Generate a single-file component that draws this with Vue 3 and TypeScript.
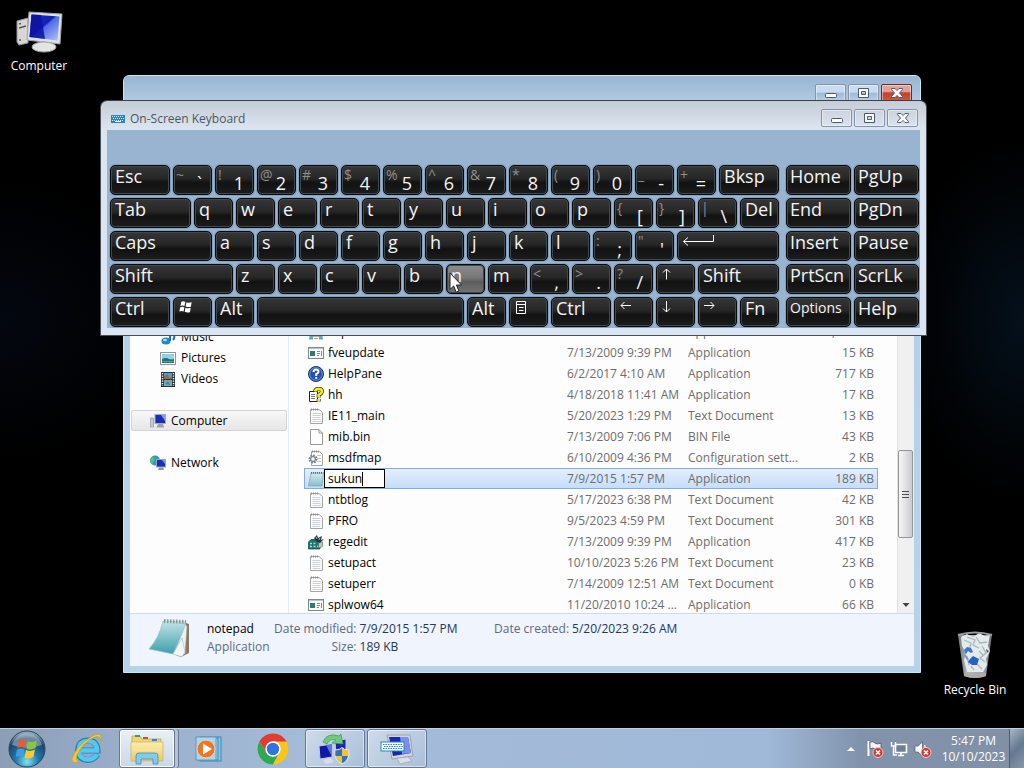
<script setup lang="ts">
interface Key {
  span: number
  label?: string
  upper?: string
  lower?: string
  icon?: string
  name?: string
  hover?: boolean
}

interface FileRow {
  icon: string
  name: string
  date: string
  type: string
  size: string
  selected?: boolean
}

const letters = (text: string): Key[] => text.split('').map((c) => ({ span: 2, label: c, hover: c === 'n' }))
const pair = (upper: string, lower: string): Key => ({ span: 2, upper, lower })

const rows: Key[][] = [
  [
    { span: 3, label: 'Esc' },
    pair('~', '`'), pair('!', '1'), pair('@', '2'), pair('#', '3'), pair('$', '4'), pair('%', '5'),
    pair('^', '6'), pair('&', '7'), pair('*', '8'), pair('(', '9'), pair(')', '0'), pair('_', '-'), pair('+', '='),
    { span: 3, label: 'Bksp' },
  ],
  [
    { span: 4, label: 'Tab' },
    ...letters('qwertyuiop'),
    pair('{', '['), pair('}', ']'), pair('|', '\\'),
    { span: 2, label: 'Del' },
  ],
  [
    { span: 5, label: 'Caps' },
    ...letters('asdfghjkl'),
    pair(':', ';'), pair('"', "'"),
    { span: 5, icon: 'k-enter', name: 'Enter' },
  ],
  [
    { span: 6, label: 'Shift' },
    ...letters('zxcvbnm'),
    pair('<', ','), pair('>', '.'), pair('?', '/'),
    { span: 2, icon: 'k-up', name: 'Up' },
    { span: 4, label: 'Shift' },
  ],
  [
    { span: 3, label: 'Ctrl' },
    { span: 2, icon: 'k-win', name: 'Windows' },
    { span: 2, label: 'Alt' },
    { span: 10, name: 'Space' },
    { span: 2, label: 'Alt' },
    { span: 2, icon: 'k-menu', name: 'Menu' },
    { span: 3, label: 'Ctrl' },
    { span: 2, icon: 'k-left', name: 'Left' },
    { span: 2, icon: 'k-down', name: 'Down' },
    { span: 2, icon: 'k-right', name: 'Right' },
    { span: 2, label: 'Fn' },
  ],
]
const keys: Key[] = rows.flat()
const sideKeys = ['Home', 'PgUp', 'End', 'PgDn', 'Insert', 'Pause', 'PrtScn', 'ScrLk', 'Options', 'Help']

const files: FileRow[] = [
  { icon: 'f-explorer', name: 'explorer', date: '2/25/2011 11:19 PM', type: 'Application', size: '2,804 KB' },
  { icon: 'f-exe', name: 'fveupdate', date: '7/13/2009 9:39 PM', type: 'Application', size: '15 KB' },
  { icon: 'f-help', name: 'HelpPane', date: '6/2/2017 4:10 AM', type: 'Application', size: '717 KB' },
  { icon: 'f-hh', name: 'hh', date: '4/18/2018 11:41 AM', type: 'Application', size: '17 KB' },
  { icon: 'f-text', name: 'IE11_main', date: '5/20/2023 1:29 PM', type: 'Text Document', size: '13 KB' },
  { icon: 'f-blank', name: 'mib.bin', date: '7/13/2009 7:06 PM', type: 'BIN File', size: '43 KB' },
  { icon: 'f-config', name: 'msdfmap', date: '6/10/2009 4:36 PM', type: 'Configuration sett...', size: '2 KB' },
  { icon: 'f-notepad', name: 'sukun', date: '7/9/2015 1:57 PM', type: 'Application', size: '189 KB', selected: true },
  { icon: 'f-text', name: 'ntbtlog', date: '5/17/2023 6:38 PM', type: 'Text Document', size: '42 KB' },
  { icon: 'f-text', name: 'PFRO', date: '9/5/2023 4:59 PM', type: 'Text Document', size: '301 KB' },
  { icon: 'f-regedit', name: 'regedit', date: '7/13/2009 9:39 PM', type: 'Application', size: '417 KB' },
  { icon: 'f-text', name: 'setupact', date: '10/10/2023 5:26 PM', type: 'Text Document', size: '23 KB' },
  { icon: 'f-text', name: 'setuperr', date: '7/14/2009 12:51 AM', type: 'Text Document', size: '0 KB' },
  { icon: 'f-exe', name: 'splwow64', date: '11/20/2010 10:24 ...', type: 'Application', size: '66 KB' },
]

const windowButtons = ['minimize', 'maximize', 'close']
</script>

<template>
  <div class="desktop">
    <svg class="defs" aria-hidden="true">
      <defs>
        <linearGradient id="gScreen" x1="0" y1="0" x2="1" y2="1">
          <stop offset="0" stop-color="#1a2fd0" />
          <stop offset=".45" stop-color="#1420b4" />
          <stop offset=".5" stop-color="#4d6be6" />
          <stop offset="1" stop-color="#b8c6f8" />
        </linearGradient>
        <linearGradient id="gTeal" x1="0" y1="0" x2="0" y2="1">
          <stop offset="0" stop-color="#c2e4e8" />
          <stop offset="1" stop-color="#3d9fab" />
        </linearGradient>
        <linearGradient id="gPad" x1="0" y1="0" x2="0" y2="1">
          <stop offset="0" stop-color="#d3e9ee" />
          <stop offset="1" stop-color="#86c0cc" />
        </linearGradient>
        <linearGradient id="gFolder" x1="0" y1="0" x2="0" y2="1">
          <stop offset="0" stop-color="#fbeeb0" />
          <stop offset="1" stop-color="#ecca62" />
        </linearGradient>
        <radialGradient id="gOrb" cx=".5" cy=".85" r=".8">
          <stop offset="0" stop-color="#7fe4f5" />
          <stop offset=".4" stop-color="#2079a8" />
          <stop offset=".8" stop-color="#1c4468" />
          <stop offset="1" stop-color="#8da6bb" />
        </radialGradient>
        <linearGradient id="gBin" x1="0" y1="0" x2="1" y2="0">
          <stop offset="0" stop-color="#8f979c" />
          <stop offset=".3" stop-color="#dfe6ea" />
          <stop offset=".75" stop-color="#c7d0d6" />
          <stop offset="1" stop-color="#7c868c" />
        </linearGradient>
      </defs>

      <symbol id="k-enter" viewBox="0 0 34 14"><path d="M1.500 7.500H31.500V1M6 3.500L1.500 7.500L6 11.500" /></symbol>
      <symbol id="k-up" viewBox="0 0 14 14"><path d="M5.500 12.500V2M2 5.500L5.500 2L9 5.500" /></symbol>
      <symbol id="k-down" viewBox="0 0 14 14"><path d="M5.500 1V12M2 8.500L5.500 12L9 8.500" /></symbol>
      <symbol id="k-left" viewBox="0 0 14 14"><path d="M12 5.500H2M5.500 2L2 5.500L5.500 9" /></symbol>
      <symbol id="k-right" viewBox="0 0 14 14"><path d="M1 5.500H11M7.500 2L11 5.500L7.500 9" /></symbol>
      <symbol id="k-win" viewBox="0 0 15 14">
        <g fill="#fff" stroke="none">
          <path d="M3.500 1.500Q5.500 .3 7.800 1.400L7 6Q5 5 2.600 6Z" /><path d="M9 1.900Q11.500 3 14.600 2L13.800 6.600Q11 7.500 8.200 6.400Z" />
          <path d="M2.300 7.300Q4.600 6.200 6.800 7.300L6 11.800Q4 10.800 1.500 11.800Z" /><path d="M8 7.700Q10.500 8.800 13.600 7.900L12.800 12.500Q10 13.400 7.200 12.200Z" />
        </g>
      </symbol>
      <symbol id="k-menu" viewBox="0 0 14 14"><path d="M2.500 1.500H11.500V13.500H2.500ZM2 4.500H12M5 7.500H9.500M5 10.500H9.500" /></symbol>

      <symbol id="w-minimize" viewBox="0 0 14 12"><rect x="1.500" y="6.500" width="11" height="4" rx="1" fill="#fdfdfe" stroke="#4d5a75" /></symbol>
      <symbol id="w-maximize" viewBox="0 0 14 12"><path fill="#fdfdfe" fill-rule="evenodd" stroke="#4d5a75" d="M1.500 1.500H11.500V10.500H1.500ZM4.500 4.500V7.500H8.500V4.500Z" /></symbol>
      <symbol id="w-close" viewBox="0 0 14 12"><path fill="#fdfdfe" stroke="#4d5a75" stroke-linejoin="round" d="M1.500 1.500H5L7 3.500L9 1.500H12.500V2.500L9.500 6L12.500 9.500V10.500H9L7 8.500L5 10.500H1.500V9.500L4.500 6L1.500 2.500Z" /></symbol>

      <symbol id="f-exe" viewBox="0 0 16 16">
        <rect x=".5" y="2.500" width="15" height="11" fill="#f8f9f9" stroke="#7d8a92" /><path d="M1 3.500H15" stroke="#b9c3ca" />
        <rect x="2" y="6" width="5" height="5" fill="#35776a" /><path d="M9 6.500H12M9 8.500H12M9 10.500H11M13.500 6V11" stroke="#7f8c92" />
      </symbol>
      <symbol id="f-help" viewBox="0 0 16 16">
        <circle cx="8" cy="8" r="7.500" fill="#2350b5" stroke="#1a3677" /><circle cx="8" cy="8" r="6.300" fill="none" stroke="#7ea5e8" stroke-width=".8" />
        <path d="M5.400 6Q6 3.400 8.200 3.500Q10.700 3.800 10.400 6Q10.200 7.200 8.200 8.200V9.900M8.200 11V12.700" fill="none" stroke="#fff" stroke-width="2" />
      </symbol>
      <symbol id="f-hh" viewBox="0 0 16 16">
        <path d="M1.500 4.500H9.500V14.500H1.500Z" fill="#fff" stroke="#222" /><path d="M3 7.500H7M3 9.500H7M3 11.500H7" stroke="#777" />
        <path d="M7 4.500Q7.500 1.800 11 1.800Q14.500 2.200 13.800 5Q13.400 6.800 10.700 8V10.500M10.700 12V14.500" fill="none" stroke="#222" stroke-width="4" />
        <path d="M7 4.500Q7.500 1.800 11 1.800Q14.500 2.200 13.800 5Q13.400 6.800 10.700 8V10.500M10.700 12V14.500" fill="none" stroke="#f5ee1e" stroke-width="2.800" />
      </symbol>
      <symbol id="f-text" viewBox="0 0 16 16">
        <path d="M2.500 1.500H11L14.500 4.500V15.500H2.500Z" fill="#fcfcfc" stroke="#a4a4a4" /><path d="M3 1.500H11" stroke="#8a8a8a" stroke-dasharray="1 1" stroke-width="2" />
        <path d="M4.500 5.500H12.500M4.500 7.500H12.500M4.500 9.500H12.500M4.500 11.500H12.500M4.500 13.500H12.500" stroke="#cfd2d5" />
      </symbol>
      <symbol id="f-blank" viewBox="0 0 16 16"><path d="M2.500 .5H11L14.500 4V15.500H2.500ZM11 .5V4H14.500" fill="#fefefe" stroke="#9a9a9a" /></symbol>
      <symbol id="f-config" viewBox="0 0 16 16">
        <path d="M3.500 1.500H11.500L14.500 4.500V15.500H3.500Z" fill="#fcfcfc" stroke="#a4a4a4" /><path d="M4 1.500H11" stroke="#8a8a8a" stroke-dasharray="1 1" stroke-width="2" />
        <path d="M9 5.500H13M9 8.500H13M9 11.500H13" stroke="#c3c6ca" />
        <circle cx="5" cy="9" r="3.500" fill="#d5dade" stroke="#6f7b85" stroke-width="2" stroke-dasharray="1.600 1.100" /><circle cx="5" cy="9" r="2.500" fill="#d5dade" stroke="#77828b" /><circle cx="5" cy="9" r="1" fill="#fff" />
      </symbol>
      <symbol id="f-notepad" viewBox="0 0 16 16">
        <path d="M3 2L15.500 2L14 15H.5Z" fill="url(#gPad)" stroke="#7ea6ac" stroke-width=".7" /><path d="M3 1.800H15.500" stroke="#5a6d70" stroke-dasharray="1 1" stroke-width="1.800" />
      </symbol>
      <symbol id="f-regedit" viewBox="0 0 16 16">
        <path d="M.5 8L3 5.500H10L12 8V15H.5Z" fill="#18766c" stroke="#123f3a" stroke-width=".7" />
        <path d="M2 9.500H4M5.500 9.500H7.500M2 12.500H4M5.500 12.500H7.500M9 12.500H10.500" stroke="#9fe5d9" stroke-width="1.700" />
        <path d="M6 4L9 1L10 4L14 2L13 6L16 5L12 9L8 7Z" fill="#243442" /><path d="M8 3L9 5M12 4L11 6" stroke="#8fc3d8" /><path d="M10.500 9L14.500 8V12.500L10.500 14Z" fill="#b9c9b2" stroke="#52635a" stroke-width=".6" />
      </symbol>
      <symbol id="f-explorer" viewBox="0 0 16 16">
        <path d="M1 3H15V13H1Z" fill="url(#gFolder)" /><path d="M1 15.500Q1.500 10 6 10H10Q14.500 10 15 15.500H11V12.500H5V15.500Z" fill="#59a9c6" /><path d="M6 14.500H10" stroke="#d99a3d" />
      </symbol>

      <symbol id="s-music" viewBox="0 0 16 16">
        <ellipse cx="6" cy="12" rx="4.500" ry="3.500" fill="#2387c9" /><ellipse cx="5" cy="11" rx="2" ry="1.300" fill="#a5dcf5" /><path d="M10 12V1Q11 5 14 6Q15 9 13 11" fill="none" stroke="#1872b4" stroke-width="2" />
      </symbol>
      <symbol id="s-pictures" viewBox="0 0 16 16">
        <rect x=".5" y="2.500" width="15" height="12" fill="#fff" stroke="#8b98a1" /><rect x="2" y="4" width="12" height="9" fill="#8fd3e8" /><path d="M2 9Q6 7 9 9Q12 10 14 8.500V13H2Z" fill="#256f76" /><path d="M2 11.500H14" stroke="#5da69b" />
      </symbol>
      <symbol id="s-videos" viewBox="0 0 16 16">
        <rect x="1" y="1" width="14" height="15" fill="#2d3237" /><path d="M2.500 2V15M13.500 2V15" stroke="#fff" stroke-width="1.400" stroke-dasharray="1.300 1.200" />
        <rect x="4" y="2" width="8" height="6" fill="#4c9fd2" /><rect x="4" y="9" width="8" height="6" fill="#5dafdb" /><path d="M4 5L8 3L9 7L12 6V8H4ZM5 13L8 10L10 14Z" fill="#9c6a3e" />
      </symbol>
      <symbol id="s-computer" viewBox="0 0 16 16">
        <rect x=".5" y="5" width="3" height="9" fill="#c4c9ce" stroke="#8b929a" stroke-width=".6" /><rect x="5" y="1.500" width="10.500" height="9" fill="#1c2cb8" stroke="#a3abb5" /><path d="M11 2H15V8Z" fill="#8496ee" /><path d="M8 11H13L14 14.500H6.500Z" fill="#9ba2aa" />
      </symbol>
      <symbol id="s-network" viewBox="0 0 16 16">
        <circle cx="5" cy="5.500" r="5" fill="#2a9bc4" /><path d="M2 2Q6 4 4 6T2.500 9.500Q0 7 .5 4Z" fill="#5fc36b" />
        <rect x="6.500" y="4.500" width="9" height="7.500" fill="#1830b4" stroke="#9ba6b6" /><path d="M12 5H15V9Z" fill="#7f93ea" /><path d="M9 12.500H13L14 15H8Z" fill="#8c96a4" />
      </symbol>
    </svg>

    <a class="shortcut computer" href="#computer">
      <svg width="48" height="44" viewBox="0 0 48 44" aria-hidden="true">
        <path d="M2 11L13 8V33L4 35L2 32Z" fill="#d6d7d5" stroke="#8f918f" /><path d="M4 14L6 13.500M4 18L11 16M5 29V31" stroke="#555" stroke-width="1.500" />
        <path d="M14 2L47 4L45 34L12 30Z" fill="#dfe1e2" stroke="#9fa2a4" /><path d="M16.500 4.500L44.500 6.500L42.500 30.500L14.500 27Z" fill="url(#gScreen)" /><path d="M16.500 4.500L26 5L30 29L14.500 27Z" fill="#0d12a0" opacity=".85" />
        <path d="M25 31L33 32V37H25Z" fill="#b9bbbb" /><ellipse cx="29" cy="37" rx="12" ry="5" fill="#e3e4e3" stroke="#a0a2a1" />
      </svg>
      <span>Computer</span>
    </a>

    <a class="shortcut recycle" href="#recycle">
      <svg width="40" height="48" viewBox="0 0 40 48" aria-hidden="true">
        <path d="M3 4L37 4L31 45Q20 49 9 45Z" fill="url(#gBin)" opacity=".8" />
        <path d="M6 6L12 3L18 6L24 2L30 5L35 4L33 15L35 20L31 28L32 34L28 41H12L9 29L11 22L7 15Z" fill="#e4e9ec" />
        <path d="M9 9L16 12L14 19M12 6L20 9L18 14L24 17M21 6L25 12L32 11M27 15L31 22L25 27L30 31M22 33L27 38M12 25L14 34M24 20L28 24M16 35L19 39" fill="none" stroke="#aab5bc" stroke-width="1.300" />
        <path d="M31 18L34 20L32 22Z" fill="#4a545a" />
        <path d="M3 4Q20 -1 37 4" fill="none" stroke="#99a1a5" stroke-width="2" /><path d="M9 42Q20 46 31 42V45Q20 49 9 45Z" fill="#b5aaa0" />
        <path d="M9 19L12 16L16 17L18 21L16 22L13 20L11 23Z" fill="#3b78cc" /><path d="M15 28L18 25L24 28L22 34L17 34L13 31Z" fill="#2563c2" /><path d="M10 24L13 29" stroke="#6b9fe0" stroke-width="2" />
      </svg>
      <span>Recycle Bin</span>
    </a>

    <section class="window explorer" aria-label="Windows folder">
      <header class="titlebar">
        <div class="controls">
          <button v-for="b in windowButtons" :key="b" type="button" :class="b" :aria-label="b">
            <svg width="14" height="12"><use :href="'#w-' + b" /></svg>
          </button>
        </div>
      </header>
      <div class="body">
        <div class="toolbar"></div>
        <div class="panes">
          <nav class="tree">
            <a class="child" href="#music"><svg width="16" height="16"><use href="#s-music" /></svg>Music</a>
            <a class="child" href="#pictures"><svg width="16" height="16"><use href="#s-pictures" /></svg>Pictures</a>
            <a class="child" href="#videos"><svg width="16" height="16"><use href="#s-videos" /></svg>Videos</a>
            <a class="root current" href="#computer"><svg width="16" height="16"><use href="#s-computer" /></svg>Computer</a>
            <a class="root" href="#network"><svg width="16" height="16"><use href="#s-network" /></svg>Network</a>
          </nav>
          <div class="files">
            <table>
              <colgroup><col /><col class="c-date" /><col class="c-type" /><col class="c-size" /></colgroup>
              <tbody>
                <tr v-for="f in files" :key="f.name" :class="{ selected: f.selected }">
                  <td>
                    <div class="name">
                      <svg width="16" height="16"><use :href="'#' + f.icon" /></svg>
                      <span v-if="f.selected" class="rename">
                        <input type="text" :value="f.name" aria-label="File name" /><i class="caret"></i>
                      </span>
                      <span v-else>{{ f.name }}</span>
                    </div>
                  </td>
                  <td>{{ f.date }}</td>
                  <td>{{ f.type }}</td>
                  <td class="size">{{ f.size }}</td>
                </tr>
              </tbody>
            </table>
          </div>
          <div class="scroll">
            <div class="thumb"><i></i><i></i><i></i></div>
            <svg class="arrow" width="16" height="16" viewBox="0 0 16 16"><path d="M4.500 6H11.500L8 10Z" fill="#3f4449" /></svg>
          </div>
        </div>
        <footer class="details">
          <svg width="44" height="42" viewBox="0 0 44 42" aria-hidden="true">
            <path d="M38 5L41 6V35L33 39L28 37Z" fill="#8a7862" /><path d="M36 6L39 8L37 36L26 36Z" fill="#eef1ee" stroke="#9aa" stroke-width=".6" />
            <path d="M15 3L38 4Q35 15 25 36L1 31Q11 20 15 3Z" fill="url(#gTeal)" stroke="#9cc0c4" stroke-width=".7" /><path d="M16 3L38 4" stroke="#8a999b" stroke-width="4" stroke-dasharray="1.500 1.500" />
            <path d="M34 20L25 36L34 39L37 34Z" fill="#f1f5f5" stroke="#a5b5b5" stroke-width=".6" />
          </svg>
          <div class="who"><strong>notepad</strong><span>Application</span></div>
          <dl class="meta first"><dt>Date modified:</dt><dd>7/9/2015 1:57 PM</dd><dt>Size:</dt><dd>189 KB</dd></dl>
          <dl class="meta"><dt>Date created:</dt><dd>5/20/2023 9:26 AM</dd></dl>
        </footer>
      </div>
    </section>

    <section class="window keyboard" aria-label="On-Screen Keyboard">
      <header class="titlebar">
        <svg class="app-icon" width="16" height="16" viewBox="0 0 16 16" aria-hidden="true">
          <rect x="1" y="4" width="14" height="8" fill="#2d82be" /><path d="M2 5.500H14M3 7.500H14M2 9.500H14" stroke="#d5ecf9" stroke-dasharray="1 1" /><path d="M5 10.500H11" stroke="#e8f5fc" />
        </svg>
        <h1>On-Screen Keyboard</h1>
        <div class="controls">
          <button v-for="b in windowButtons" :key="b" type="button" :aria-label="b">
            <svg width="14" height="12"><use :href="'#w-' + b" /></svg>
          </button>
        </div>
      </header>
      <div class="board">
        <div class="main-keys">
          <button
            v-for="(k, i) in keys"
            :key="i"
            type="button"
            class="key"
            :class="['s' + k.span, { hover: k.hover }]"
            :aria-label="k.name"
          >
            <span v-if="k.label" class="cap">{{ k.label }}</span>
            <template v-else-if="k.upper">
              <span class="upper">{{ k.upper }}</span><span class="lower">{{ k.lower }}</span>
            </template>
            <svg v-else-if="k.icon" class="glyph" :width="k.icon === 'k-enter' ? 34 : 14" height="14"><use :href="'#' + k.icon" /></svg>
          </button>
        </div>
        <div class="side-keys">
          <button v-for="s in sideKeys" :key="s" type="button" class="key" :class="{ small: s === 'Options' }">
            <span class="cap">{{ s }}</span>
          </button>
        </div>
      </div>
    </section>

    <svg class="pointer" width="14" height="22" viewBox="0 0 14 22" aria-hidden="true">
      <path d="M1 1V17.500L4.600 14L7.200 20.200L10 19L7.400 13H12.500Z" fill="#fff" stroke="#222" />
    </svg>

    <footer class="taskbar">
      <button class="orb" type="button" aria-label="Start">
        <svg width="38" height="38" viewBox="0 0 38 38">
          <circle cx="19" cy="19" r="18" fill="url(#gOrb)" stroke="#29465f" /><path d="M4 15A15.500 15.500 0 0 1 34 15Q19 20 4 15Z" fill="#dcebf5" opacity=".4" />
          <path d="M11 11Q15 8.500 18.500 10.500L17 18Q13.500 16 9.500 18Z" fill="#ee5a29" /><path d="M20 11.500Q24 13 29 10.500L27.500 18Q23 20.500 18.500 18.500Z" fill="#8cc63e" />
          <path d="M9 19.500Q13 17.500 16.500 19.500L15 27Q11.500 25 7.500 27Z" fill="#3c9fe2" /><path d="M18 20Q22.500 22 27 19.500L25.500 27Q21 29.500 16.500 27.500Z" fill="#fdc92e" />
        </svg>
      </button>
      <button class="launch" type="button" aria-label="Internet Explorer">
        <svg width="32" height="32" viewBox="0 0 32 32">
          <path d="M26.500 21.500Q23 27 16.500 27Q7 26 7 17Q8 7.500 17 7.500Q26 8 26.500 17.500H10" fill="none" stroke="#1f83bd" stroke-width="6" /><path d="M26 21.500Q23 26.500 16.500 26.500Q7.500 25.500 7.500 17Q8.500 8 17 8Q26 8.500 26 17.500H10" fill="none" stroke="#58c7ee" stroke-width="4.500" />
          <path d="M30 3Q28 -1 20 4Q5 13 1 26Q1 32 9 28Q4 29 6 22Q12 9 24 4Q29 2 30 8Z" fill="#f3c832" stroke="#c99c18" stroke-width=".6" />
        </svg>
      </button>
      <button class="task active" type="button" aria-label="Windows Explorer">
        <svg width="34" height="32" viewBox="0 0 34 32">
          <path d="M2 3H10L12 6H31V27H2Z" fill="#eed57b" stroke="#b89c46" stroke-width=".7" /><path d="M5 3H10" stroke="#2ba85a" stroke-width="2" /><path d="M13 5H18" stroke="#d94a35" stroke-width="2" /><path d="M22 7H27" stroke="#3687c4" stroke-width="2" />
          <path d="M1 9H33V28H1Z" fill="url(#gFolder)" stroke="#cdb05b" stroke-width=".7" /><path d="M3 13H31M3 17H31" stroke="#f8e6a2" />
          <path d="M6 31V23Q6 20 9 20H25Q28 20 28 23V31H23V26H11V31Z" fill="#83cbed" stroke="#438fb7" stroke-width=".8" />
        </svg>
      </button>
      <button class="launch wmp" type="button" aria-label="Media Player">
        <svg width="28" height="28" viewBox="0 0 28 28">
          <rect x="5" y="2" width="21" height="24" fill="#8ac6e6" stroke="#3a87b4" /><rect x="3" y="3" width="20" height="22" fill="#9dd0ea" stroke="#3a87b4" /><rect x="1" y="2" width="20" height="23" fill="#b3d4e8" stroke="#5b9cc0" />
          <circle cx="11" cy="14" r="9" fill="#ef7522" stroke="#d7d7d7" /><path d="M8 8.500L17 14L8 19.500Z" fill="#fff" />
        </svg>
      </button>
      <button class="launch chrome" type="button" aria-label="Chrome">
        <svg width="32" height="32" viewBox="0 0 32 32">
          <path d="M2.600 8.300L9.300 20L16 24L22 20L16 31.500A15.500 15.500 0 0 1 2.600 8.300Z" fill="#2da94f" /><path d="M16 8.500H29.500A15.500 15.500 0 0 1 16 31.500L22.500 19.800Z" fill="#fbc516" /><path d="M2.600 8.300L9.500 19.800L16 8.500H29.500Q25 .5 16 .5Q7 .5 2.600 8.300Z" fill="#e33b2e" />
          <circle cx="16" cy="16" r="7.700" fill="#fff" /><circle cx="16" cy="16" r="6.200" fill="#3174e0" />
        </svg>
      </button>
      <button class="task" type="button" aria-label="Remote utility">
        <svg width="34" height="32" viewBox="0 0 34 32">
          <path d="M1 13L14 11V24L2 26Z" fill="#1118a6" stroke="#c4cdd8" /><path d="M8 12L14 11V24Z" fill="#5b74e0" /><path d="M17 8L28 6V20L18 22Z" fill="#1a24ba" stroke="#c4cdd8" /><path d="M5 27L13 25L16 29L8 31Z" fill="#d8dde1" />
          <path d="M5 9Q9 -1 21 3L23 1L25 11L14 10L18 7Q12 5 9 11Z" fill="#6fcb78" stroke="#3b9c54" stroke-width=".7" />
          <path d="M17 17Q22 17 24 14.500Q26 17 31 17Q32 28 24 31Q16 28 17 17Z" fill="#f1c23b" stroke="#e1e6ea" /><path d="M24 15V23H17.500Q17 20 17.500 17.500Q22 17.500 24 15ZM24 23H30Q28 29 24 30Z" fill="#2b73bd" />
        </svg>
      </button>
      <button class="task" type="button" aria-label="On-Screen Keyboard">
        <svg width="34" height="32" viewBox="0 0 34 32">
          <path d="M7 2L30 2L33 23L12 26Z" fill="#cfd6dd" stroke="#9ba5b0" /><path d="M9 4L28 4L31 20L13 23Z" fill="#1b27b4" /><path d="M20 4L28 4L31 20L22 21Z" fill="#7c90ea" />
          <path d="M17 25L28 24L32 28L20 31Z" fill="#dce0e3" stroke="#9ba5b0" stroke-width=".7" /><rect x="1" y="9" width="23" height="9" fill="#f3fbff" stroke="#2387c0" /><path d="M3 11.500H23M4 13.500H23M3 15.500H23" stroke="#2387c0" stroke-dasharray="1.500 1" />
        </svg>
      </button>
      <div class="tray">
        <svg class="chevron" width="8" height="6" viewBox="0 0 8 6" aria-hidden="true"><path d="M0 5L4 1L8 5Z" fill="#fff" /></svg>
        <svg width="18" height="18" viewBox="0 0 18 18" aria-hidden="true">
          <path d="M2.500 1V16" stroke="#fff" stroke-width="2" /><path d="M4 2Q7 1 9 3T15 3V10Q11 11 9 9T4 9Z" fill="#f3f5f8" stroke="#4b5665" stroke-width=".8" /><circle cx="12" cy="12.500" r="5" fill="#d23a30" stroke="#f0c9c5" /><path d="M10 10.500L14 14.500M14 10.500L10 14.500" stroke="#fff" stroke-width="1.600" />
        </svg>
        <svg width="18" height="18" viewBox="0 0 18 18" aria-hidden="true">
          <path d="M5.500 4.500H16.500V12.500H5.500Z" fill="#6d8093" stroke="#fff" stroke-width="1.600" /><path d="M8 15.500H14M11 13V15" stroke="#fff" stroke-width="1.600" /><path d="M1.500 2V6H5.500V2M3.500 6V15H7" fill="none" stroke="#fff" stroke-width="1.400" />
        </svg>
        <svg width="18" height="18" viewBox="0 0 18 18" aria-hidden="true">
          <path d="M1 6H4L8.500 2V16L4 12H1Z" fill="#fff" stroke="#4b5665" stroke-width=".7" /><path d="M10.500 5Q12 8 11 11" fill="none" stroke="#fff" stroke-width="1.400" /><circle cx="12" cy="12.500" r="5" fill="#d23a30" stroke="#f0c9c5" /><path d="M10 10.500L14 14.500M14 10.500L10 14.500" stroke="#fff" stroke-width="1.600" />
        </svg>
        <time class="clock"><span>5:47 PM</span><span>10/10/2023</span></time>
        <button class="peek" type="button" aria-label="Show desktop"></button>
      </div>
    </footer>
  </div>
</template>

<style>
body {
  margin: 0;
  background: #000;
}
</style>

<style scoped>
.desktop {
  position: relative;
  display: flex;
  flex-direction: column;
  justify-content: flex-end;
  height: 100vh;
  overflow: hidden;
  background:
    radial-gradient(ellipse 120px 180px at 100% 320px, #04101b, transparent),
    radial-gradient(ellipse 160px 140px at 0 320px, #03070f, transparent),
    #000;
  font-family: "Open Sans", "Noto Sans", sans-serif;
  font-size: 12px;
  line-height: 16px;
}
.desktop *,
.desktop *::before {
  box-sizing: border-box;
}
.defs {
  position: absolute;
  width: 0;
  height: 0;
}
button {
  margin: 0;
  padding: 0;
  border: 0;
  background: none;
  font: inherit;
}
a {
  color: inherit;
  text-decoration: none;
}
.shortcut {
  position: absolute;
  display: flex;
  flex-direction: column;
  align-items: center;
  width: 76px;
  color: #fff;
  white-space: nowrap;
}
.computer {
  left: 1px;
  top: 10px;
  gap: 4px;
}
.recycle {
  right: 11px;
  top: 631px;
  gap: 3px;
}

.window {
  position: absolute;
  display: flex;
  flex-direction: column;
}
.titlebar {
  display: flex;
}
.controls {
  display: flex;
  gap: 2px;
  margin-left: auto;
}
.controls button {
  display: flex;
  align-items: center;
  justify-content: center;
  width: 31px;
  height: 18px;
  border: 1px solid #8393ab;
  border-radius: 2px;
  box-shadow: inset 0 0 0 1px rgba(255, 255, 255, .45);
}

.explorer {
  left: 123px;
  right: 103px;
  top: 75px;
  bottom: 95px;
  padding: 0 6px 6px;
  border: 1px solid #c5e6f6;
  border-radius: 6px 6px 0 0;
  background: linear-gradient(#98b4d0, #b6cfe8 30px, #b8d2ea);
}
.explorer .titlebar {
  height: 30px;
  padding: 8px 2px 0;
}
.explorer .controls button {
  background: linear-gradient(#c9dbee 45%, #a0b9d4 50%, #b9d0e7);
}
.explorer .controls .close {
  border-color: #6c2a28;
  background: linear-gradient(#e2a297 40%, #c3422c 50%, #cc5a3d);
}
.body {
  display: flex;
  flex: 1;
  flex-direction: column;
  min-height: 0;
}
.toolbar {
  flex: 0 0 215px;
  background: #f1f5fb;
}
.panes {
  display: flex;
  flex: 1;
  min-height: 0;
  overflow: hidden;
  background: #fdfdfd;
}
.tree {
  display: flex;
  flex-direction: column;
  width: 159px;
  padding: 5px 1px 0;
  border-right: 1px solid #e6ebf4;
}
.tree a {
  display: flex;
  align-items: center;
  flex: 0 0 21px;
  gap: 5px;
  border: 1px solid transparent;
}
.tree .child {
  padding-left: 28px;
}
.tree .root {
  margin-top: 21px;
  padding-left: 18px;
}
.tree .current {
  border-color: #d4d4d6;
  border-radius: 2px;
  background: linear-gradient(#f8f8f8, #e6e6e7);
}
.files {
  flex: 1;
  min-width: 0;
  padding: 0 19px 0 15px;
}
table {
  width: 100%;
  border-spacing: 0;
  table-layout: fixed;
}
.c-date {
  width: 121px;
}
.c-type {
  width: 112px;
}
.c-size {
  width: 78px;
}
td {
  height: 21px;
  padding: 0;
  overflow: hidden;
  color: #6d6d6d;
  white-space: nowrap;
}
.size {
  padding-right: 4px;
  text-align: right;
}
.name {
  display: flex;
  align-items: center;
  gap: 4px;
  padding-left: 4px;
  color: #000;
}
.selected {
  outline: 1px solid #84acdd;
  outline-offset: -1px;
  background: linear-gradient(#e4effd, #c4dcfa);
}
.rename {
  position: relative;
  display: flex;
  margin-left: -4px;
}
.rename input {
  width: 61px;
  height: 19px;
  padding: 0 3px;
  border: 1px solid #000;
  border-radius: 0;
  outline: 0;
  background: #fff;
  color: #000;
  font: inherit;
}
.caret {
  position: absolute;
  left: 38px;
  top: 3px;
  width: 1px;
  height: 14px;
  background: #000;
}
.scroll {
  position: relative;
  width: 17px;
  border-left: 1px solid #e2e2e2;
  background: #f0f0f0;
}
.thumb {
  position: absolute;
  top: 129px;
  left: 0;
  right: 1px;
  display: flex;
  flex-direction: column;
  align-items: center;
  justify-content: center;
  gap: 2px;
  height: 88px;
  border: 1px solid #959595;
  border-radius: 2px;
  background: linear-gradient(90deg, #f6f6f6, #e2e2e3 50%, #c9cacd);
}
.thumb i {
  width: 7px;
  height: 1px;
  background: #4d4d4f;
}
.arrow {
  position: absolute;
  bottom: 0;
  left: 0;
}
.details {
  display: flex;
  flex: 0 0 53px;
  padding: 4px 0 0 18px;
  border-top: 1px solid #d3dae6;
  background: #f0f4fd;
  line-height: 18px;
}
.who {
  display: flex;
  flex-direction: column;
  width: 67px;
  margin: 2px 0 0 15px;
  color: #5e6b82;
}
.who strong {
  color: #000;
  font-weight: 400;
}
.meta {
  display: grid;
  grid-template-columns: auto auto;
  align-content: start;
  justify-content: start;
  gap: 0 3px;
  margin: 2px 0 0;
  color: #1e395b;
  white-space: nowrap;
}
.first {
  width: 220px;
}
.meta dt {
  color: #5a6a84;
  text-align: right;
}
.meta dd {
  margin: 0;
}

.keyboard {
  left: 100px;
  right: 97px;
  top: 100px;
  padding: 0 6px 7px;
  border: 1px solid #494e57;
  border-top-color: #3c4048;
  border-radius: 7px 7px 0 0;
  background: linear-gradient(#c5cdd6, #dbe5f0 28px, #d9e5f2);
}
.keyboard .titlebar {
  align-items: center;
  height: 29px;
  padding: 6px 2px 0 3px;
}
.keyboard .controls {
  align-self: flex-start;
  margin-top: 2px;
}
h1 {
  margin: 0 0 0 4px;
  color: #4c5663;
  font-size: 12px;
  font-weight: 400;
}
.board {
  display: flex;
  gap: 7px;
  padding: 35px 1px 1px 3px;
  background: #99b4d1;
}
.main-keys,
.side-keys {
  display: grid;
  grid-auto-rows: 30px;
  gap: 3px;
}
.main-keys {
  flex: 669 1 0;
  grid-template-columns: repeat(32, minmax(0, 1fr));
}
.side-keys {
  flex: 133 1 0;
  grid-template-columns: repeat(2, minmax(0, 1fr));
}
.key {
  position: relative;
  display: flex;
  justify-content: space-between;
  padding: 0 9px 0 4px;
  border: 1px solid #07090a;
  border-radius: 5px;
  background: linear-gradient(#363636, #262626 45%, #121212 60%, #1c1c1c);
  box-shadow: inset 0 0 0 1px #3c4a4e, 0 0 0 1px #86a1bd;
  color: #f4f4f4;
  font-size: 18px;
  line-height: 20px;
}
.side-keys .key {
  padding-left: 3px;
}
.key.hover {
  background: linear-gradient(#8c8c8c, #777 45%, #5c5c5c 60%, #747474);
}
.s2 { grid-column: span 2; }
.s3 { grid-column: span 3; }
.s4 { grid-column: span 4; }
.s5 { grid-column: span 5; }
.s6 { grid-column: span 6; }
.s10 { grid-column: span 10; }
.upper {
  color: #8f9090;
  font-size: 14px;
  line-height: 18px;
}
.main-keys .key:has(.upper) {
  padding-left: 2px;
}
.lower {
  padding-top: 7px;
}
.side-keys .small {
  font-size: 14px;
}
.glyph {
  margin: 2px 0 0;
  fill: none;
  stroke: #fff;
}
.pointer {
  position: absolute;
  left: 449px;
  top: 272px;
}

.taskbar {
  display: flex;
  flex: 0 0 40px;
  align-items: stretch;
  border-top: 1px solid #c3cfdd;
  background: linear-gradient(90deg, #8c9db6, #99aeca 12%, #a4bcd8 30%, #a0b9d8 75%, #8193ac 84%, #8190a6);
}
.taskbar button {
  display: flex;
  align-items: center;
  justify-content: center;
}
.orb {
  width: 54px;
}
.launch {
  width: 65px;
}
.wmp {
  width: 63px;
}
.task {
  width: 60px;
  margin-right: 2px;
  border: 1px solid #66778f;
  border-radius: 3px;
  background: linear-gradient(135deg, #cedbe9, #a9bfd9);
  box-shadow: inset 0 0 0 1px rgba(255, 255, 255, .5);
}
.task.active {
  width: 56px;
  background: linear-gradient(#e9eff6, #c9d8e9);
  box-shadow: inset 0 0 0 1px #fff, 3px 0 0 #b3c5da, 4px 0 0 #66778f;
}
.tray {
  display: flex;
  align-items: center;
  gap: 6px;
  margin-left: auto;
  color: #fff;
}
.chevron {
  margin-right: 5px;
}
.clock {
  display: flex;
  flex-direction: column;
  width: 71px;
  text-align: center;
}
.peek {
  align-self: stretch;
  width: 15px;
  margin-left: -6px;
  border: 1px solid #4d5d72;
  border-width: 0 0 0 1px;
  background: linear-gradient(135deg, #a8b7c8, #66788d 50%, #8798ab);
}
</style>
